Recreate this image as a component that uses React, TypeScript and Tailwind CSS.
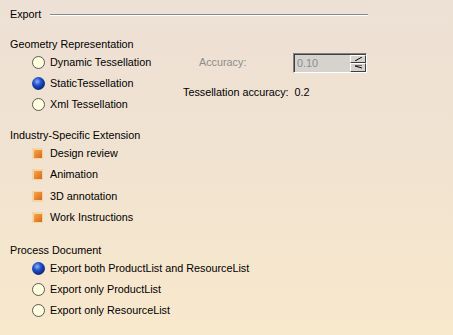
import React from 'react';

function Radio({ checked }: { checked?: boolean }) {
  if (checked) {
    return (
      <span className="w-[13px] h-[13px] rounded-full shrink-0 bg-[radial-gradient(circle_at_40%_35%,#8fb2ff_0%,#1f4fc7_35%,#0b2a80_70%,#b48e5d_85%,#e9d4b7_100%)]" />
    );
  }
  return (
    <span className="w-[13px] h-[13px] rounded-full shrink-0 border border-[#5a5a50] bg-[#fffde0]" />
  );
}

function Check() {
  return (
    <span className="w-[11px] h-[11px] shrink-0 flex items-center justify-center bg-[#f4d3a8]">
      <span className="w-[8px] h-[8px] bg-[linear-gradient(135deg,#f7a64d,#d96a10)]" />
    </span>
  );
}

function OptionRow({ label, checked, box }: { label: string; checked?: boolean; box?: boolean }) {
  return (
    <div className="h-[21px] flex items-center pl-[32px] gap-[5px]">
      {box ? <Check /> : <Radio checked={checked} />}
      <span className={box ? 'ml-[2px]' : ''}>{label}</span>
    </div>
  );
}

export default function App() {
  return (
    <div
      className="w-[453px] h-[335px] overflow-hidden bg-[linear-gradient(180deg,#ede0d5_0%,#f1e3d0_50%,#f8e8cc_100%)] text-[10.8px] text-black"
      style={{ fontFamily: '"Liberation Sans", Arial, sans-serif' }}
    >
      <div className="flex items-center h-[28px] pl-[10px] pt-[1px]">
        <span>Export</span>
        <div className="ml-[9px] w-[318px] h-[2px] border-t border-[#8a8a8a] border-b border-b-white" />
      </div>

      <div className="pl-[10px] mt-[9px] h-[14px] flex items-center">Geometry Representation</div>
      <div className="flex mt-[1px]">
        <div className="flex flex-col w-[172px]">
          <OptionRow label="Dynamic Tessellation" />
          <OptionRow label="StaticTessellation" checked />
          <OptionRow label="Xml Tessellation" />
        </div>
        <div className="flex flex-col pl-[11px]">
          <div className="h-[21px] flex items-center">
            <span className="w-[110px] pl-[16px] text-[#8c8c8c]">Accuracy:</span>
            <div className="flex w-[74px] h-[20px] border border-t-[#808080] border-l-[#808080] border-r-white border-b-white">
              <div className="flex-1 bg-[#d6d3ce] border-t border-l border-[#404040] flex items-center pl-[2px] text-[#8c8c8c]">
                0.10
              </div>
              <div className="w-[16px] flex flex-col bg-[#d6d3ce] border-t border-[#404040]">
                <div className="h-[9px] border border-t-white border-l-white border-r-[#404040] border-b-[#404040] flex items-center justify-center">
                  <svg width="7" height="4" viewBox="0 0 7 4"><path d="M0 4 L7 0" stroke="#000" strokeWidth="1" /></svg>
                </div>
                <div className="h-[9px] border border-t-white border-l-white border-r-[#404040] border-b-[#404040] flex items-center justify-center">
                  <svg width="7" height="4" viewBox="0 0 7 4"><path d="M0 0 L7 0 M0 1 L7 3" stroke="#000" strokeWidth="1" /></svg>
                </div>
              </div>
            </div>
          </div>
          <div className="h-[21px] flex items-center mt-[9px]">Tessellation accuracy:&nbsp; 0.2</div>
        </div>
      </div>

      <div className="pl-[10px] mt-[13px] h-[14px] flex items-center">Industry-Specific Extension</div>
      <div className="flex flex-col mt-[1px]">
        <OptionRow label="Design review" box />
        <OptionRow label="Animation" box />
        <div className="h-[22px] flex items-center pl-[32px] gap-[5px]">
          <Check />
          <span className="ml-[2px]">3D annotation</span>
        </div>
        <OptionRow label="Work Instructions" box />
      </div>

      <div className="pl-[10px] mt-[15px] h-[14px] flex items-center">Process Document</div>
      <div className="flex flex-col mt-[1px]">
        <OptionRow label="Export both ProductList and ResourceList" checked />
        <OptionRow label="Export only ProductList" />
        <OptionRow label="Export only ResourceList" />
      </div>
    </div>
  );
}
